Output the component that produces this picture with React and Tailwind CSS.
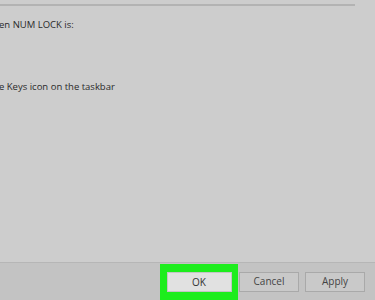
import React from 'react';

function DialogButton({ label, primary }) {
  return (
    <button
      className={
        primary
          ? 'w-[65px] h-[20px] bg-[#e1e1e1] border border-[#c4c4c4] text-[10px] text-[#333]'
          : 'w-[60px] h-[20px] bg-[#c9c9c9] border border-[#a9a9a9] text-[10px] text-[#444]'
      }
    >
      {label}
    </button>
  );
}

export default function App() {
  return (
    <div
      className="w-[375px] h-[300px] bg-[#cdcdcd] flex flex-col overflow-hidden"
      style={{ fontFamily: '"Open Sans", "Noto Sans", sans-serif' }}
    >
      <div className="pt-[4px]">
        <div className="w-[355px] h-[2px] bg-[#b3b3b3]" />
      </div>

      <div className="flex-1 text-[9.5px] text-[#2a2a2a] leading-none">
        <p className="mt-[14px] -ml-[1px]">en NUM LOCK is:</p>
        <p className="mt-[52px] -ml-[1px]">e Keys icon on the taskbar</p>
      </div>

      <div className="h-[38px] border-t border-[#b6b6b6] bg-[#c3c3c3] flex items-stretch">
        <div className="flex-1" />
        <div className="mt-[1px] w-[78px] bg-[#1ded1d] flex items-center justify-center">
          <DialogButton label="OK" primary />
        </div>
        <div className="flex items-center gap-[6px] pl-[1px] pr-[10px]">
          <DialogButton label="Cancel" />
          <DialogButton label="Apply" />
        </div>
      </div>
    </div>
  );
}
